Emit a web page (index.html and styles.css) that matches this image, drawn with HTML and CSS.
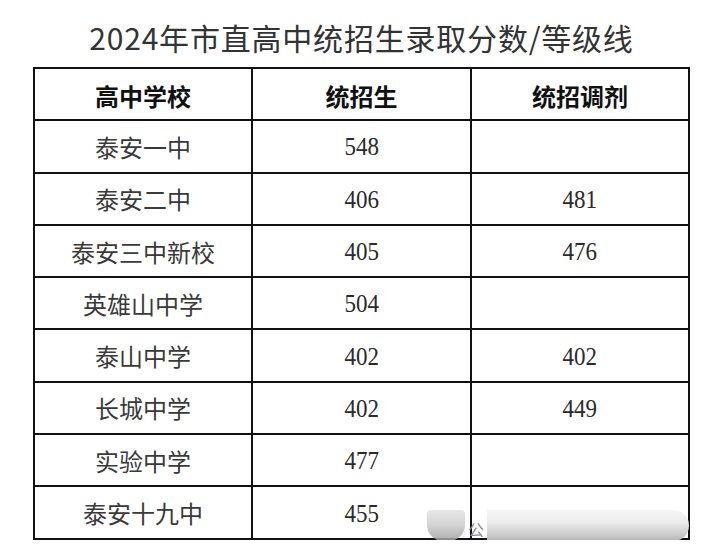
FILE: index.html
```html
<!DOCTYPE html>
<html lang="zh-CN">
<head>
<meta charset="utf-8">
<title>2024年市直高中统招生录取分数/等级线</title>
<link rel="stylesheet" href="styles.css">
</head>
<body>
<main class="page">
  <h1 class="title">2024年市直高中统招生录取分数/等级线</h1>
  <div class="table">
    <div class="cell head">高中学校</div>
    <div class="cell head">统招生</div>
    <div class="cell head">统招调剂</div>

    <div class="cell name">泰安一中</div>
    <div class="cell num"><span>548</span></div>
    <div class="cell num"></div>

    <div class="cell name">泰安二中</div>
    <div class="cell num"><span>406</span></div>
    <div class="cell num"><span>481</span></div>

    <div class="cell name">泰安三中新校</div>
    <div class="cell num"><span>405</span></div>
    <div class="cell num"><span>476</span></div>

    <div class="cell name">英雄山中学</div>
    <div class="cell num"><span>504</span></div>
    <div class="cell num"></div>

    <div class="cell name">泰山中学</div>
    <div class="cell num"><span>402</span></div>
    <div class="cell num"><span>402</span></div>

    <div class="cell name">长城中学</div>
    <div class="cell num"><span>402</span></div>
    <div class="cell num"><span>449</span></div>

    <div class="cell name">实验中学</div>
    <div class="cell num"><span>477</span></div>
    <div class="cell num"></div>

    <div class="cell name">泰安十九中</div>
    <div class="cell num"><span>455</span></div>
    <div class="cell num"></div>

    <div class="watermark" aria-hidden="true">
      <span class="wm-avatar"></span>
      <span class="wm-text">公</span>
      <span class="wm-pill"></span>
    </div>
  </div>
</main>
</body>
</html>
```

FILE: styles.css
```css
html, body {
  margin: 0;
  padding: 0;
  background: #ffffff;
}

.page {
  width: 657px;
  margin-left: 33px;
  padding-top: 19px;
}

.title {
  margin: 0 0 12px 0;
  height: 36px;
  line-height: 36px;
  text-align: center;
  font-family: "Noto Sans CJK SC", "Liberation Serif", serif;
  font-weight: 400;
  font-size: 30px;
  letter-spacing: 0.8px;
  color: #333333;
}

.table {
  position: relative;
  display: grid;
  grid-template-columns: 218px 219px 218px;
  grid-auto-rows: 52.3px;
  border-top: 2px solid #111111;
  border-left: 2px solid #111111;
  width: 655px;
}

.cell {
  display: flex;
  align-items: center;
  justify-content: center;
  border-right: 2px solid #111111;
  border-bottom: 2px solid #111111;
  font-size: 24px;
}

.head {
  font-family: "Noto Sans CJK SC", sans-serif;
  font-weight: 700;
  color: #111111;
  padding-top: 3px;
}

.name {
  font-family: "Noto Sans CJK SC", sans-serif;
  font-weight: 400;
  color: #3a3a3a;
}

.num {
  font-family: "Liberation Serif", "Noto Sans CJK SC", serif;
  font-size: 25px;
  color: #2a2a2a;
  padding-top: 2px;
}

.num span {
  display: inline-block;
  transform: scaleX(0.92);
}

.watermark {
  position: absolute;
  left: 392px;
  top: 441px;
  width: 262px;
  height: 31px;
  display: flex;
  align-items: stretch;
}

.wm-avatar {
  width: 38px;
  border-radius: 4px 4px 16px 16px;
  background: linear-gradient(to bottom, #e4e4e4 0%, #cacaca 50%, #9e9e9e 100%);
  opacity: 0.85;
}

.wm-text {
  width: 22px;
  display: flex;
  align-items: center;
  justify-content: center;
  font-family: "Noto Sans CJK SC", sans-serif;
  font-size: 16px;
  color: #8a8a8a;
  padding-top: 6px;
}

.wm-pill {
  flex: 1;
  border-radius: 0 16px 16px 0;
  background: linear-gradient(to bottom, #f6f6f6 0%, #ebebeb 40%, #cfcfcf 75%, #b5b5b5 100%);
}
```
